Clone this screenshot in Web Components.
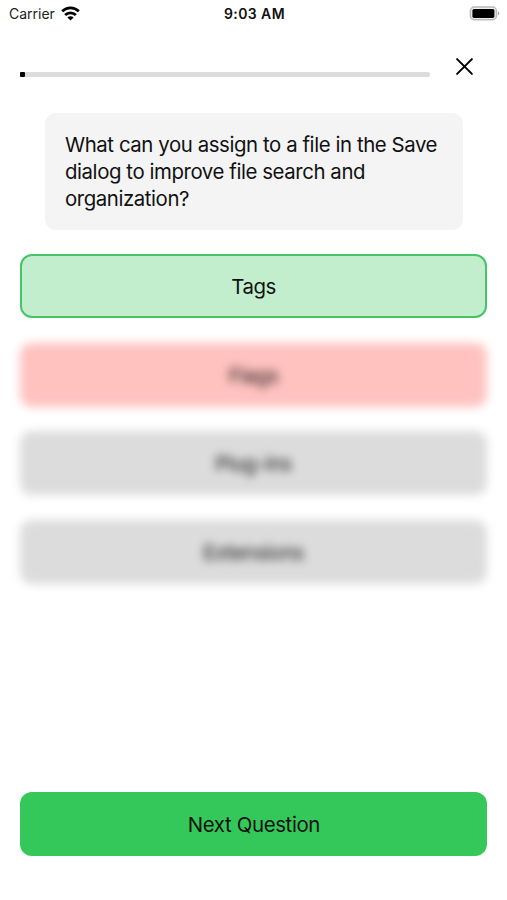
<!DOCTYPE html>
<html lang="en">
<head>
<meta charset="utf-8">
<title>Quiz</title>
<style>
    body {
        margin: 0;
        background: #fff;
        color: #111;
        font-family: Inter, "Liberation Sans", sans-serif;
    }
</style>
</head>
<body>
<quiz-screen>
    <status-bar slot="status" carrier="Carrier" time="9:03 AM"></status-bar>
    <quiz-progress slot="progress" value="1.2"></quiz-progress>
    <quiz-question slot="question">What can you assign to a file in the Save dialog to improve file search and organization?</quiz-question>
    <quiz-option state="correct">Tags</quiz-option>
    <quiz-option state="wrong">Flags</quiz-option>
    <quiz-option state="idle">Plug-ins</quiz-option>
    <quiz-option state="idle">Extensions</quiz-option>
    <next-button slot="footer">Next Question</next-button>
</quiz-screen>

<script>
class QuizElement extends HTMLElement {
    constructor() {
        super();
        this.attachShadow({ mode: 'open' });
        const template = document.createElement('template');
        template.innerHTML = this.render();
        this.shadowRoot.appendChild(template.content.cloneNode(true));
    }
}

class QuizScreen extends QuizElement {
    render() {
        return `
            <style>
                :host {
                    display: flex;
                    flex-direction: column;
                    box-sizing: border-box;
                    height: 900px;
                    padding-bottom: 44px;
                    overflow: hidden;
                }
                .options {
                    display: grid;
                    gap: 24.4px;
                    padding: 24.4px 20px 0 20px;
                }
                footer {
                    margin-top: auto;
                    padding: 0 19.6px 0 20.4px;
                }
            </style>
            <slot name="status"></slot>
            <slot name="progress"></slot>
            <slot name="question"></slot>
            <div class="options"><slot></slot></div>
            <footer><slot name="footer"></slot></footer>
        `;
    }
}

class StatusBar extends QuizElement {
    render() {
        return `
            <style>
                :host {
                    display: grid;
                    grid-template-columns: 1fr auto 1fr;
                    align-items: center;
                    height: 27px;
                    padding: 0 7px 0 9px;
                    font-size: 14px;
                }
                .left {
                    display: flex;
                    align-items: center;
                    gap: 6px;
                }
                .carrier {
                    color: #222;
                }
                .time {
                    font-weight: 600;
                    letter-spacing: 0.4px;
                }
                .battery {
                    justify-self: end;
                }
                svg {
                    display: block;
                }
            </style>
            <div class="left">
                <span class="carrier"></span>
                <svg width="19" height="15" viewBox="0 0 19 15">
                    <g fill="none" stroke="#000" stroke-width="2.9">
                        <path d="M1.2 5.3C5.9.7 13.1.7 17.8 5.3"/>
                        <path d="M4.1 9C7.2 6.1 11.8 6.1 14.9 9"/>
                    </g>
                    <path d="M6.4 11.4C8.2 9.9 10.8 9.9 12.6 11.4L9.5 14.6Z"/>
                </svg>
            </div>
            <span class="time"></span>
            <svg class="battery" width="31" height="15" viewBox="0 0 31 15">
                <rect x="1.4" y="1.1" width="26" height="12.6" rx="3.8" fill="#eee" stroke="#bbb" stroke-width="1.5"/>
                <rect x="3.4" y="2.9" width="22" height="9" rx="1.6"/>
                <path d="M28.8 5.2C31 6.2 31 8.6 28.8 9.6Z" fill="#aaa"/>
            </svg>
        `;
    }

    connectedCallback() {
        this.shadowRoot.querySelector('.carrier').textContent = this.getAttribute('carrier');
        this.shadowRoot.querySelector('.time').textContent = this.getAttribute('time');
    }
}

class QuizProgress extends QuizElement {
    render() {
        return `
            <style>
                :host {
                    display: flex;
                    align-items: flex-start;
                    gap: 25px;
                    height: 22px;
                    padding: 30px 33px 0 20px;
                }
                .track {
                    flex: 1;
                    height: 5px;
                    margin-top: 15px;
                    border-radius: 2px;
                    background: #dcdcdc;
                }
                .fill {
                    height: 100%;
                    border-radius: 1px;
                    background: #000;
                }
                button {
                    margin: 0;
                    padding: 0;
                    border: 0;
                    background: none;
                }
                svg {
                    display: block;
                }
            </style>
            <div class="track"><div class="fill"></div></div>
            <button aria-label="Close">
                <svg width="19" height="19" viewBox="0 0 19 19">
                    <path d="M2.1 2.1L16.9 16.9M16.9 2.1L2.1 16.9" fill="none" stroke="#000" stroke-width="2" stroke-linecap="round"/>
                </svg>
            </button>
        `;
    }

    connectedCallback() {
        this.shadowRoot.querySelector('.fill').style.width = `${this.getAttribute('value')}%`;
    }
}

class QuizQuestion extends QuizElement {
    render() {
        return `
            <style>
                :host {
                    display: block;
                    box-sizing: border-box;
                    height: 117px;
                    margin: 34px 44px 0 45px;
                    padding: 18px 20px;
                    border-radius: 11px;
                    background: #f4f4f4;
                    font-size: 20.4px;
                    line-height: 27px;
                    letter-spacing: -0.42px;
                }
            </style>
            <slot></slot>
        `;
    }
}

class QuizOption extends QuizElement {
    render() {
        return `
            <style>
                :host {
                    display: flex;
                    align-items: center;
                    justify-content: center;
                    box-sizing: border-box;
                    height: 64px;
                    padding-top: 1px;
                    border-radius: 12px;
                    background: #dcdcdc;
                    font-size: 20.4px;
                    letter-spacing: -0.42px;
                }
                :host([state="correct"]) {
                    border: 2px solid #45c566;
                    background: #c2eecd;
                }
                :host([state="wrong"]) {
                    background: #ffc2bf;
                    filter: blur(4.6px);
                }
                :host([state="idle"]) {
                    filter: blur(4.6px);
                }
            </style>
            <slot></slot>
        `;
    }
}

class NextButton extends QuizElement {
    render() {
        return `
            <style>
                :host {
                    display: flex;
                    align-items: center;
                    justify-content: center;
                    height: 64px;
                    border-radius: 12px;
                    background: #34c759;
                    font-size: 20.4px;
                    letter-spacing: -0.36px;
                }
            </style>
            <slot></slot>
        `;
    }
}

customElements.define('quiz-screen', QuizScreen);
customElements.define('status-bar', StatusBar);
customElements.define('quiz-progress', QuizProgress);
customElements.define('quiz-question', QuizQuestion);
customElements.define('quiz-option', QuizOption);
customElements.define('next-button', NextButton);
</script>
</body>
</html>
